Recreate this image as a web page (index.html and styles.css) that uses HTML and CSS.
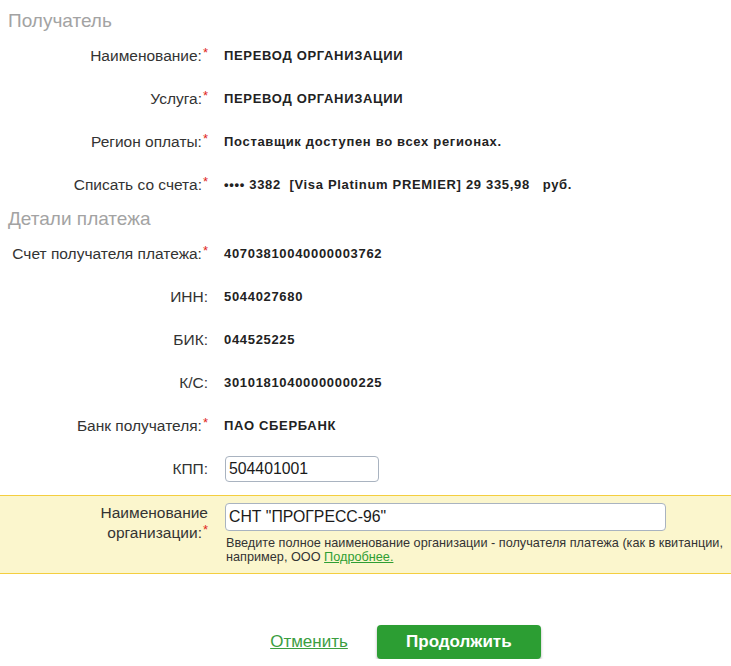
FILE: index.html
```html
<!DOCTYPE html>
<html lang="ru">
<head>
<meta charset="utf-8">
<title>Платёж</title>
<link rel="stylesheet" href="styles.css">
</head>
<body>
<div class="page">
  <h2 class="section-title first">Получатель</h2>
  <div class="form">
    <div class="row">
      <div class="label">Наименование:<span class="req">*</span></div>
      <div class="value">ПЕРЕВОД ОРГАНИЗАЦИИ</div>
    </div>
    <div class="row">
      <div class="label">Услуга:<span class="req">*</span></div>
      <div class="value">ПЕРЕВОД ОРГАНИЗАЦИИ</div>
    </div>
    <div class="row">
      <div class="label">Регион оплаты:<span class="req">*</span></div>
      <div class="value">Поставщик доступен во всех регионах.</div>
    </div>
    <div class="row">
      <div class="label">Списать со счета:<span class="req">*</span></div>
      <div class="value">•••• 3382&nbsp; [Visa Platinum PREMIER] 29 335,98 &nbsp; руб.</div>
    </div>
  </div>
  <h2 class="section-title">Детали платежа</h2>
  <div class="form">
    <div class="row">
      <div class="label">Счет получателя платежа:<span class="req">*</span></div>
      <div class="value">40703810040000003762</div>
    </div>
    <div class="row">
      <div class="label">ИНН:</div>
      <div class="value">5044027680</div>
    </div>
    <div class="row">
      <div class="label">БИК:</div>
      <div class="value">044525225</div>
    </div>
    <div class="row">
      <div class="label">К/С:</div>
      <div class="value">30101810400000000225</div>
    </div>
    <div class="row">
      <div class="label">Банк получателя:<span class="req">*</span></div>
      <div class="value">ПАО СБЕРБАНК</div>
    </div>
    <div class="row row-input">
      <div class="label">КПП:</div>
      <div class="value"><input class="field field-short" type="text" value="504401001"></div>
    </div>
  </div>
  <div class="highlight">
    <div class="row row-top">
      <div class="label label-multi">Наименование организации:<span class="req">*</span></div>
      <div class="value">
        <input class="field field-long" type="text" value="СНТ &quot;ПРОГРЕСС-96&quot;">
        <div class="hint">Введите полное наименование организации - получателя платежа (как в квитанции, например, ООО <a href="#" class="hint-link">Подробнее.</a></div>
      </div>
    </div>
  </div>
  <div class="actions">
    <a href="#" class="cancel">Отменить</a>
    <button class="btn-primary" type="button">Продолжить</button>
  </div>
</div>
</body>
</html>
```

FILE: styles.css
```css
html, body {
  margin: 0;
  padding: 0;
  background: #fff;
}
body {
  font-family: "Liberation Sans", Arial, sans-serif;
  color: #333;
  width: 731px;
  overflow: hidden;
}
.page {
  padding-top: 8px;
}
.section-title {
  margin: 0;
  padding-left: 8px;
  font-size: 19px;
  font-weight: normal;
  color: #a3a3a3;
  line-height: 26px;
  height: 26px;
}
.form {
  display: flex;
  flex-direction: column;
}
.row {
  display: grid;
  grid-template-columns: 208px 1fr;
  column-gap: 16px;
  align-items: center;
  height: 43px;
}
.label {
  text-align: right;
  font-size: 15.5px;
  color: #333;
  white-space: nowrap;
}
.req {
  color: #e0261b;
  position: relative;
  top: -4px;
  margin-left: 1px;
  font-size: 13px;
}
.value {
  font-size: 13px;
  font-weight: bold;
  letter-spacing: 0.68px;
  color: #222;
  min-width: 0;
}
.field {
  box-sizing: border-box;
  height: 26px;
  border: 1px solid #a9b3c0;
  border-radius: 4px;
  padding: 0 3px;
  font-family: "Liberation Sans", Arial, sans-serif;
  font-size: 15.8px;
  letter-spacing: 0;
  font-weight: normal;
  color: #1a1a1a;
  background: #fff;
  margin-left: 1px;
  outline: none;
}
.field-short { width: 154px; }
.field-long { width: 441px; height: 28px; }
.highlight {
  margin-top: 5px;
  background: #fbf6cd;
  border-top: 1px solid #f4ce3f;
  border-bottom: 1px solid #f4ce3f;
  padding: 7px 0 9px;
}
.row-top {
  height: auto;
  align-items: start;
}
.label-multi {
  white-space: normal;
  line-height: 20px;
  padding-top: 0;
  padding-left: 80px;
}
.hint {
  font-size: 12.7px;
  font-weight: normal;
  letter-spacing: 0;
  color: #333;
  line-height: 14px;
  margin-top: 5px;
  margin-left: 2px;
}
.hint-link {
  color: #2e9e33;
  text-decoration: underline;
}
.actions {
  display: flex;
  align-items: center;
  justify-content: center;
  gap: 29px;
  margin-top: 51px;
  padding-left: 80px;
}
.cancel {
  font-size: 17px;
  color: #3c9e3f;
  text-decoration: underline;
}
.btn-primary {
  width: 164px;
  height: 34px;
  border: none;
  border-radius: 4px;
  background: #2c9e33;
  color: #fff;
  font-family: "Liberation Sans", Arial, sans-serif;
  font-size: 17px;
  font-weight: bold;
  box-shadow: 0 2px 3px rgba(0,0,0,0.3);
  cursor: pointer;
}
```
